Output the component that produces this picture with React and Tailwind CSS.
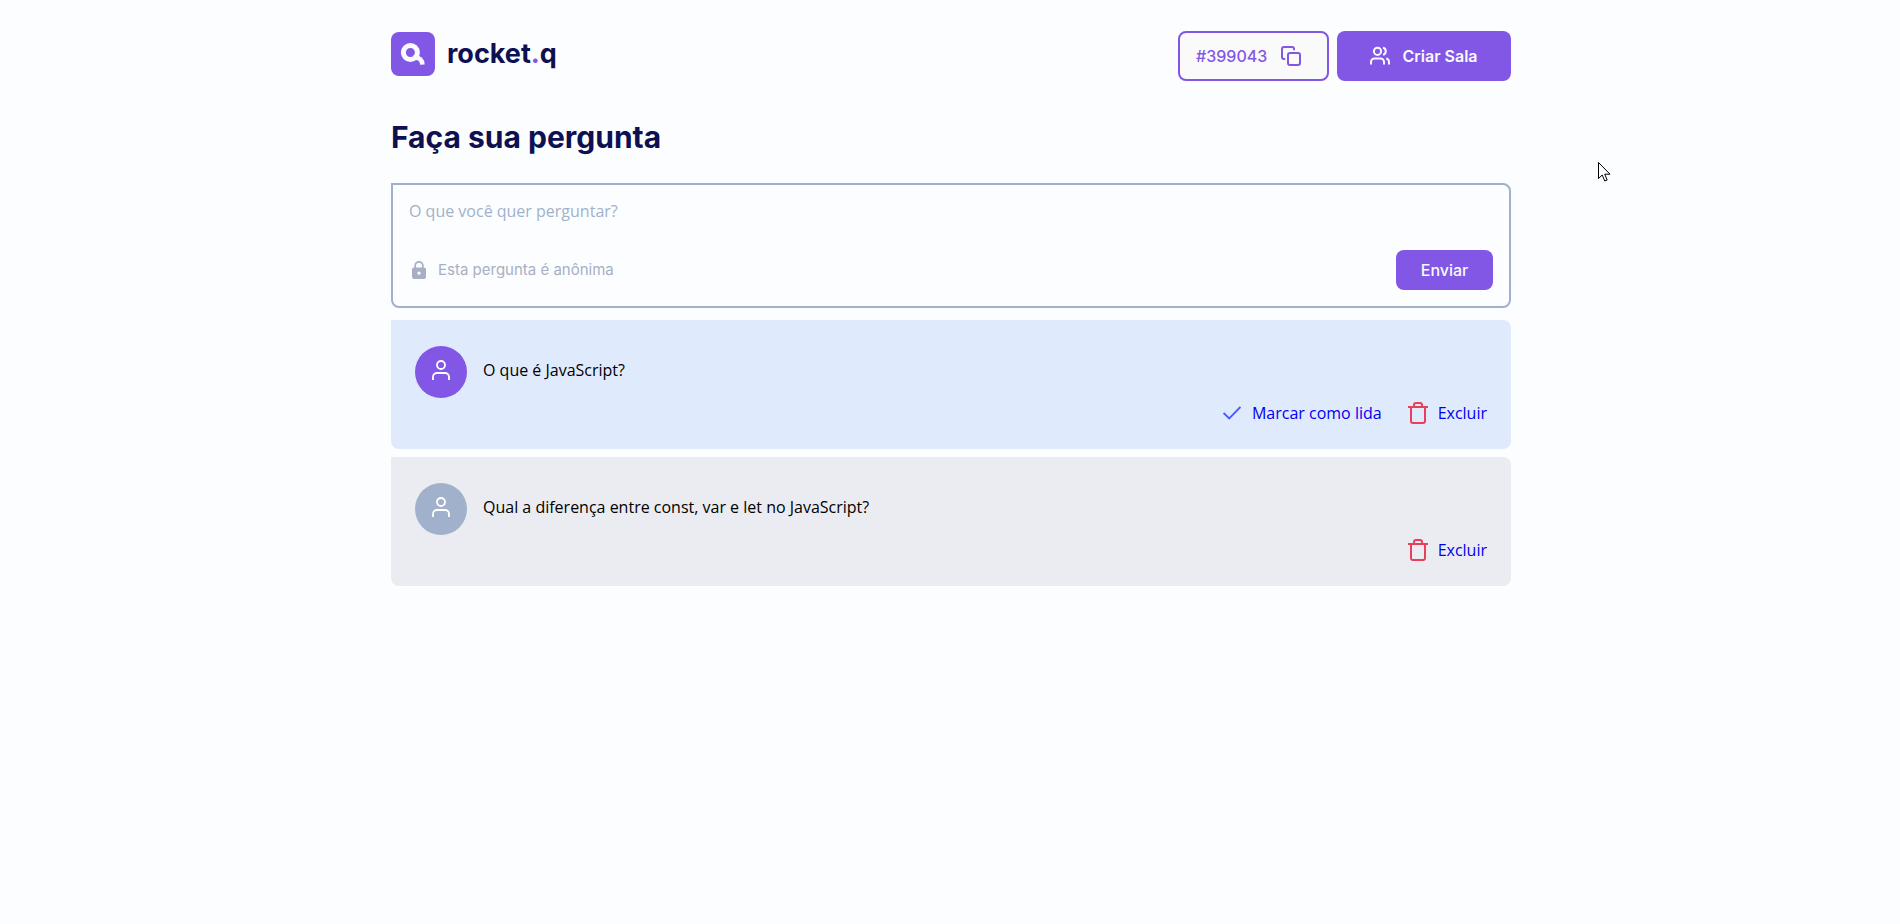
import { useState } from "react";

function LogoMark() {
  return (
    <svg className="size-11" viewBox="0 0 44 44" fill="none" aria-hidden="true">
      <rect width="44" height="44" rx="8" fill="#8257E5" />
      <circle cx="19.4" cy="20.5" r="7" stroke="#F8FAFF" strokeWidth="5" />
      <path d="M22.5 25.6 H24.6 C28.600 25.6 31.300 28.200 31.400 32.600" stroke="#F8FAFF" strokeWidth="4.600" />
    </svg>
  );
}

function CopyIcon() {
  return (
    <svg className="size-5" viewBox="0 0 20 20" fill="none" stroke="currentColor" strokeWidth="2" strokeLinecap="round" strokeLinejoin="round" aria-hidden="true">
      <rect x="7" y="7" width="12" height="12" rx="2" />
      <path d="M3.5 13 H3 a2 2 0 0 1 -2 -2 V3 a2 2 0 0 1 2 -2 h8 a2 2 0 0 1 2 2 v.5" />
    </svg>
  );
}

function UsersIcon() {
  return (
    <svg className="size-5" viewBox="0 0 20 20" fill="none" stroke="currentColor" strokeWidth="2" aria-hidden="true">
      <path d="M14 18.500 v-2.500 a3.500 3.500 0 0 0 -3.500 -3.500 H4.500 a3.500 3.500 0 0 0 -3.500 3.500 v2.500" />
      <circle cx="7.500" cy="5.300" r="3.600" />
      <path d="M19 18.500 v-2.500 a3.500 3.500 0 0 0 -2.800 -3.400 M13 1.800 a3.600 3.600 0 0 1 0 7" />
    </svg>
  );
}

function UserIcon() {
  return (
    <svg className="h-5 w-[18px]" viewBox="0 0 18 20" fill="none" stroke="#fff" strokeWidth="1.8" aria-hidden="true">
      <circle cx="9" cy="5" r="4" />
      <path d="M1 20 v-3 a4 4 0 0 1 4 -4 h8 a4 4 0 0 1 4 4 v3" />
    </svg>
  );
}

function LockIcon() {
  return (
    <svg className="h-[18px] w-[14px]" viewBox="0 0 14 18" aria-hidden="true">
      <path d="M3.2 7.5 V4.6 a3.8 3.8 0 0 1 7.6 0 V7.5" fill="none" stroke="#A8AFC4" strokeWidth="1.7" />
      <path fillRule="evenodd" d="M2 6.5 h10 a2 2 0 0 1 2 2 V16 a2 2 0 0 1 -2 2 H2 a2 2 0 0 1 -2 -2 V8.5 a2 2 0 0 1 2 -2 z M7 10.4 a1.7 1.7 0 1 0 0 3.4 a1.7 1.7 0 1 0 0 -3.4 z" fill="#A8AFC4" />
    </svg>
  );
}

function CheckIcon() {
  return (
    <svg className="h-[14px] w-[18px]" viewBox="0 0 18 14" fill="none" stroke="#485BFF" strokeWidth="1.8" aria-hidden="true">
      <path d="M.6 7 L6.2 12.4 L17.4 1" />
    </svg>
  );
}

function TrashIcon() {
  return (
    <svg className="h-[22px] w-5" viewBox="0 0 20 22" fill="none" stroke="#E83F5B" strokeWidth="2" aria-hidden="true">
      <path d="M0 5 H20 M3 5 V19 a2 2 0 0 0 2 2 h10 a2 2 0 0 0 2 -2 V5 M6 5 V3 a2 2 0 0 1 2 -2 h4 a2 2 0 0 1 2 2 v2" />
    </svg>
  );
}

function Question({ text, read }) {
  return (
    <li className={`rounded-lg rounded-tl-none px-6 pt-[26px] pb-6 ${read ? "bg-[#EBECF1]" : "bg-[#E0EAFD]"}`}>
      <div className="flex gap-4">
        <div className={`flex size-[52px] shrink-0 justify-center rounded-full pt-[14px] ${read ? "bg-[#A1B1CC]" : "bg-[#8257E5]"}`}>
          <UserIcon />
        </div>
        <p className="pt-3 leading-6 text-black">{text}</p>
      </div>
      <div className="mt-[3px] flex h-6 items-center justify-end gap-[26px] text-[#0000EE]">
        {!read && (
          <a href="#lida" className="flex items-center gap-[11px]">
            <CheckIcon />
            Marcar como lida
          </a>
        )}
        <a href="#excluir" className="flex items-center gap-[10px]">
          <TrashIcon />
          Excluir
        </a>
      </div>
    </li>
  );
}

export default function App() {
  const [value, setValue] = useState("");
  return (
    <div className="relative min-h-screen bg-[#FCFDFF] pl-0.5 font-['Open_Sans','Noto_Sans',sans-serif] text-base">
      <div className="mx-auto max-w-[1120px]">
        <header className="flex items-start justify-between pt-[31px]">
          <a href="#inicio" className="mt-px flex items-center gap-3 font-['Inter',sans-serif] text-[27px] leading-8 font-bold text-[#0D1151]">
            <LogoMark />
            <span>rocket<span className="text-[#8257E5]">.</span>q</span>
          </a>
          <div className="flex gap-2 font-['Inter',sans-serif] font-medium">
            <button type="button" className="flex h-[50px] w-[151px] items-center gap-[14px] rounded-lg border-2 border-[#8257E5] bg-[#FAFAFA] px-4 text-[#8257E5]">
              #399043
              <CopyIcon />
            </button>
            <button type="button" className="flex h-[50px] w-[174px] items-center justify-center gap-3 rounded-lg bg-[#8257E5] font-semibold text-[#F8FAFF]">
              <UsersIcon />
              Criar Sala
            </button>
          </div>
        </header>
        <main>
          <h1 className="mt-9 font-['Inter',sans-serif] text-[30px] leading-10 font-bold text-[#0D1151]">Faça sua pergunta</h1>
          <form onSubmit={(e) => e.preventDefault()} className="mt-[26px] rounded-lg rounded-tl-none border-2 border-[#A1B1CC] px-4 pt-[14px] pb-4">
            <textarea
              aria-label="Sua pergunta"
              rows={1}
              value={value}
              onChange={(e) => setValue(e.target.value)}
              placeholder="O que você quer perguntar?"
              className="block h-[51px] w-full resize-none bg-transparent leading-6 outline-none placeholder:text-[#A1B1CC]"
            />
            <div className="flex items-center justify-between font-['Inter',sans-serif]">
              <div className="flex items-center gap-3 pl-[3px] text-[15px] text-[#A8AFC4]">
                <LockIcon />
                Esta pergunta é anônima
              </div>
              <button type="submit" className="h-10 w-[97px] rounded-lg bg-[#8257E5] font-medium text-[#F8FAFF]">Enviar</button>
            </div>
          </form>
          <ul className="mt-3 flex flex-col gap-2">
            <Question text="O que é JavaScript?" />
            <Question text="Qual a diferença entre const, var e let no JavaScript?" read />
          </ul>
        </main>
      </div>
      <svg className="pointer-events-none absolute top-[162px] left-[1598px] h-[20px] w-[13px]" viewBox="0 0 13 20" aria-hidden="true">
        <path d="M.5 .5 V16.500 L4.200 13 L6.800 19 L9.200 18 L6.700 12.200 H12 Z" fill="#fff" stroke="#000" strokeWidth="1" />
      </svg>
    </div>
  );
}
